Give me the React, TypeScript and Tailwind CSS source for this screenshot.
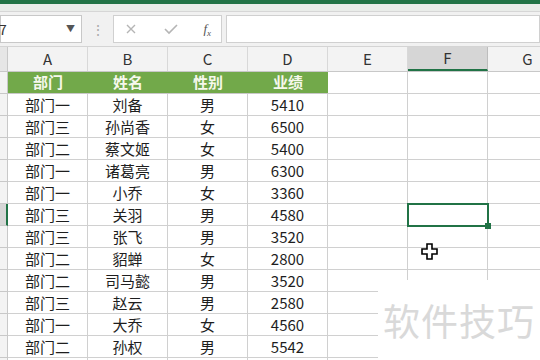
import React from 'react';

const cols = ['A', 'B', 'C', 'D', 'E', 'F', 'G'];

const rows: string[][] = [
  ['部门一', '刘备', '男', '5410'],
  ['部门三', '孙尚香', '女', '6500'],
  ['部门二', '蔡文姬', '女', '5400'],
  ['部门一', '诸葛亮', '男', '6300'],
  ['部门一', '小乔', '女', '3360'],
  ['部门三', '关羽', '男', '4580'],
  ['部门三', '张飞', '男', '3520'],
  ['部门二', '貂蝉', '女', '2800'],
  ['部门二', '司马懿', '男', '3520'],
  ['部门三', '赵云', '男', '2580'],
  ['部门一', '大乔', '女', '4560'],
  ['部门二', '孙权', '男', '5542'],
  ['', '', '', ''],
];

const font = { fontFamily: '"Noto Sans CJK SC", "Noto Sans", sans-serif' };

const App: React.FC = () => {
  return (
    <div className="relative w-[540px] h-[360px] overflow-hidden bg-white text-[#1e1e1e]" style={font}>
      {/* ribbon edge */}
      <div className="h-[4px] bg-[#217346]" />
      <div className="h-[8px] bg-[#e9ece9] border-b border-[#d6d6d6]" />

      {/* formula bar */}
      <div className="h-[35px] bg-[#f1f1f1] border-b border-[#d4d4d4] flex items-center">
        <div className="w-[82px] shrink-0 h-[28px] bg-white border border-[#c8c8c8] flex items-center justify-between pr-[6px]">
          <span className="text-[14px] text-[#333] -ml-[2px]">7</span>
          <span className="text-[9px] text-[#555]">▼</span>
        </div>
        <div className="w-[31px] shrink-0 flex justify-center text-[#aaa] text-[14px] leading-none">⋮</div>
        <div className="w-[109px] shrink-0 h-[28px] bg-white border border-[#d0d0d0] flex items-center justify-between px-[10px]">
          <svg width="14" height="14" viewBox="0 0 14 14">
            <path d="M3 3 L11 11 M11 3 L3 11" stroke="#b5b5b5" strokeWidth="1.4" />
          </svg>
          <svg width="16" height="14" viewBox="0 0 16 14">
            <path d="M2 7 L6 11 L14 3" stroke="#b5b5b5" strokeWidth="1.6" fill="none" />
          </svg>
          <span className="text-[13px] italic text-[#555]" style={{ fontFamily: '"Liberation Serif", serif' }}>
            f<sub className="text-[9px]">x</sub>
          </span>
        </div>
        <div className="ml-[4px] flex-1 h-[28px] bg-white border border-[#d0d0d0]" />
      </div>

      {/* column headers */}
      <div className="flex h-[25px] bg-[#f3f3f3] border-b border-[#c8c8c8]">
        <div className="w-[8px] shrink-0 border-r border-[#c8c8c8] bg-[#e6e6e6]" />
        {cols.map((c) => (
          <div
            key={c}
            className={
              c === 'F'
                ? 'w-[80px] shrink-0 flex items-center justify-center text-[15px] text-[#333] bg-[#d6d6d6] border-r border-[#bdbdbd] border-b-2 border-b-[#217346]'
                : 'w-[80px] shrink-0 flex items-center justify-center text-[15px] text-[#333] border-r border-[#d8d8d8]'
            }
          >
            {c}
          </div>
        ))}
      </div>

      {/* header row */}
      <div className="flex h-[22px]">
        <div className="w-[8px] shrink-0 bg-[#f3f3f3] border-r border-b border-[#c8c8c8]" />
        {['部门', '姓名', '性别', '业绩'].map((h) => (
          <div
            key={h}
            className="w-[80px] shrink-0 bg-[#72a94a] border-b border-[#c8c8c8] flex items-center justify-center text-[15px] font-bold text-[#f6f8ec]"
          >
            {h}
          </div>
        ))}
        {['E', 'F', 'G'].map((c) => (
          <div key={c} className="w-[80px] shrink-0 border-r border-b border-[#d0d0d0]" />
        ))}
      </div>

      {/* data rows */}
      {rows.map((r, i) => (
        <div key={i} className="flex h-[22px]">
          <div
            className={
              i === 5
                ? 'w-[8px] shrink-0 bg-[#d6d6d6] border-r-2 border-r-[#217346] border-b border-[#c8c8c8]'
                : 'w-[8px] shrink-0 bg-[#f3f3f3] border-r border-b border-[#c8c8c8]'
            }
          />
          {r.map((v, j) => (
            <div
              key={j}
              className="w-[80px] shrink-0 border-r border-b border-[#d0d0d0] flex items-center justify-center text-[15px] leading-none"
            >
              {v}
            </div>
          ))}
          {['E', 'F', 'G'].map((c) => (
            <div key={c} className="relative w-[80px] shrink-0 border-r border-b border-[#d0d0d0]">
              {c === 'F' && i === 5 && (
                <div className="absolute z-10 -left-[1px] -top-[1px] w-[82px] h-[24px] border-2 border-[#217346]">
                  <div className="absolute -right-[4px] -bottom-[4px] w-[6px] h-[6px] bg-[#217346]" />
                </div>
              )}
            </div>
          ))}
        </div>
      ))}

      {/* cursor */}
      <svg className="absolute left-[421px] top-[243px]" width="18" height="18" viewBox="0 0 18 18">
        <path
          d="M6 1 H11 V6 H16 V11 H11 V16 H6 V11 H1 V6 H6 Z"
          fill="white"
          stroke="black"
          strokeWidth="1.6"
        />
      </svg>

      {/* watermark */}
      <div className="absolute left-[378px] top-[280px] w-[162px] h-[80px] bg-white flex items-center justify-center">
        <span className="text-[37px] text-[#d9d9d9] tracking-[1px] leading-none mt-[1px]">软件技巧</span>
      </div>
    </div>
  );
};

export default App;
